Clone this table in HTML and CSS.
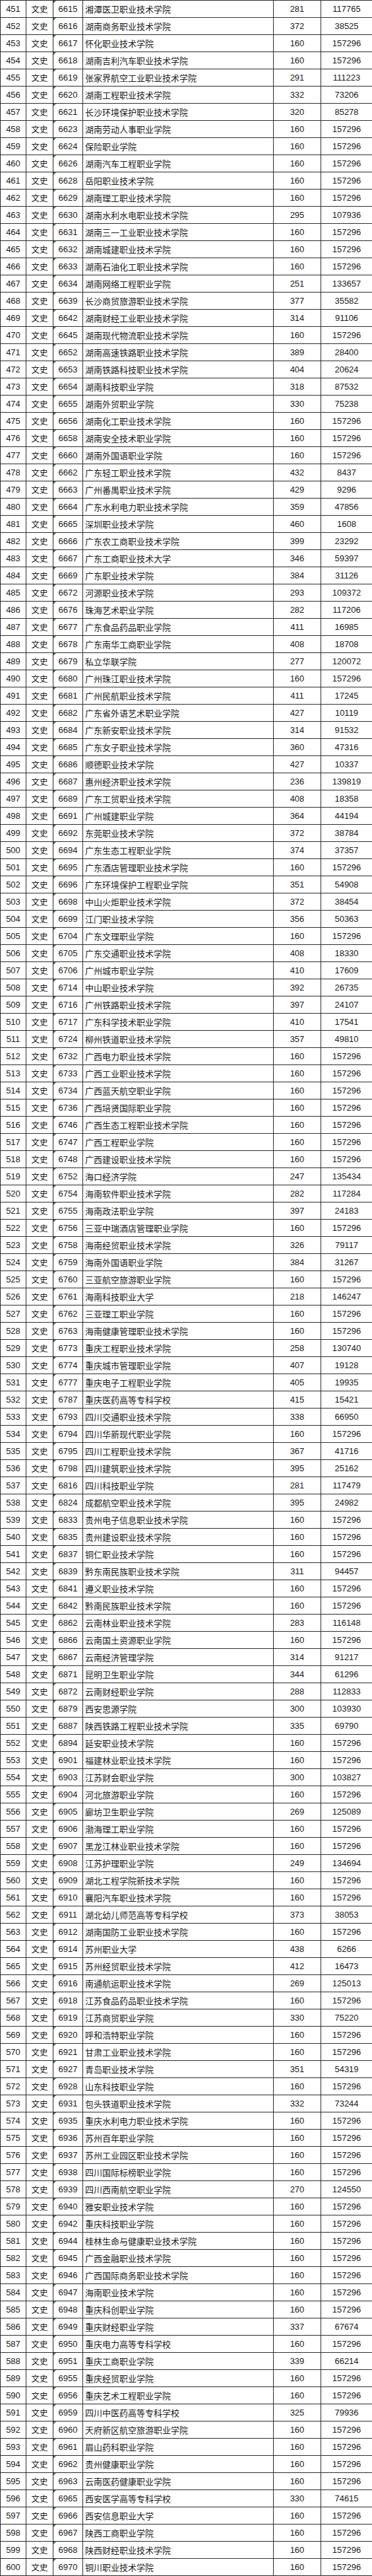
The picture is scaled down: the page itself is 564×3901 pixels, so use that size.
FILE: index.html
```html
<!DOCTYPE html>
<html lang="zh-CN">
<head>
<meta charset="utf-8">
<title>录取表</title>
<link rel="stylesheet" href="styles.css">
</head>
<body>
<table class="sheet">
<colgroup><col class="w1"><col class="w2"><col class="w3"><col class="w4"><col class="w5"><col class="w6"></colgroup>
<tbody>
<tr><td>451</td><td class="k">文史</td><td class="c">6615</td><td class="n">湘潭医卫职业技术学院</td><td>281</td><td>117765</td></tr>
<tr><td>452</td><td class="k">文史</td><td class="c">6616</td><td class="n">湖南商务职业技术学院</td><td>372</td><td>38525</td></tr>
<tr><td>453</td><td class="k">文史</td><td class="c">6617</td><td class="n">怀化职业技术学院</td><td>160</td><td>157296</td></tr>
<tr><td>454</td><td class="k">文史</td><td class="c">6618</td><td class="n">湖南吉利汽车职业技术学院</td><td>160</td><td>157296</td></tr>
<tr><td>455</td><td class="k">文史</td><td class="c">6619</td><td class="n">张家界航空工业职业技术学院</td><td>291</td><td>111223</td></tr>
<tr><td>456</td><td class="k">文史</td><td class="c">6620</td><td class="n">湖南工程职业技术学院</td><td>332</td><td>73206</td></tr>
<tr><td>457</td><td class="k">文史</td><td class="c">6621</td><td class="n">长沙环境保护职业技术学院</td><td>320</td><td>85278</td></tr>
<tr><td>458</td><td class="k">文史</td><td class="c">6623</td><td class="n">湖南劳动人事职业学院</td><td>160</td><td>157296</td></tr>
<tr><td>459</td><td class="k">文史</td><td class="c">6624</td><td class="n">保险职业学院</td><td>160</td><td>157296</td></tr>
<tr><td>460</td><td class="k">文史</td><td class="c">6626</td><td class="n">湖南汽车工程职业学院</td><td>160</td><td>157296</td></tr>
<tr><td>461</td><td class="k">文史</td><td class="c">6628</td><td class="n">岳阳职业技术学院</td><td>160</td><td>157296</td></tr>
<tr><td>462</td><td class="k">文史</td><td class="c">6629</td><td class="n">湖南理工职业技术学院</td><td>160</td><td>157296</td></tr>
<tr><td>463</td><td class="k">文史</td><td class="c">6630</td><td class="n">湖南水利水电职业技术学院</td><td>295</td><td>107936</td></tr>
<tr><td>464</td><td class="k">文史</td><td class="c">6631</td><td class="n">湖南三一工业职业技术学院</td><td>160</td><td>157296</td></tr>
<tr><td>465</td><td class="k">文史</td><td class="c">6632</td><td class="n">湖南城建职业技术学院</td><td>160</td><td>157296</td></tr>
<tr><td>466</td><td class="k">文史</td><td class="c">6633</td><td class="n">湖南石油化工职业技术学院</td><td>160</td><td>157296</td></tr>
<tr><td>467</td><td class="k">文史</td><td class="c">6634</td><td class="n">湖南网络工程职业学院</td><td>251</td><td>133657</td></tr>
<tr><td>468</td><td class="k">文史</td><td class="c">6639</td><td class="n">长沙商贸旅游职业技术学院</td><td>377</td><td>35582</td></tr>
<tr><td>469</td><td class="k">文史</td><td class="c">6642</td><td class="n">湖南财经工业职业技术学院</td><td>314</td><td>91106</td></tr>
<tr><td>470</td><td class="k">文史</td><td class="c">6645</td><td class="n">湖南现代物流职业技术学院</td><td>160</td><td>157296</td></tr>
<tr><td>471</td><td class="k">文史</td><td class="c">6652</td><td class="n">湖南高速铁路职业技术学院</td><td>389</td><td>28400</td></tr>
<tr><td>472</td><td class="k">文史</td><td class="c">6653</td><td class="n">湖南铁路科技职业技术学院</td><td>404</td><td>20624</td></tr>
<tr><td>473</td><td class="k">文史</td><td class="c">6654</td><td class="n">湖南科技职业学院</td><td>318</td><td>87532</td></tr>
<tr><td>474</td><td class="k">文史</td><td class="c">6655</td><td class="n">湖南外贸职业学院</td><td>330</td><td>75238</td></tr>
<tr><td>475</td><td class="k">文史</td><td class="c">6656</td><td class="n">湖南化工职业技术学院</td><td>160</td><td>157296</td></tr>
<tr><td>476</td><td class="k">文史</td><td class="c">6658</td><td class="n">湖南安全技术职业学院</td><td>160</td><td>157296</td></tr>
<tr><td>477</td><td class="k">文史</td><td class="c">6660</td><td class="n">湖南外国语职业学院</td><td>160</td><td>157296</td></tr>
<tr><td>478</td><td class="k">文史</td><td class="c">6662</td><td class="n">广东轻工职业技术学院</td><td>432</td><td>8437</td></tr>
<tr><td>479</td><td class="k">文史</td><td class="c">6663</td><td class="n">广州番禺职业技术学院</td><td>429</td><td>9296</td></tr>
<tr><td>480</td><td class="k">文史</td><td class="c">6664</td><td class="n">广东水利电力职业技术学院</td><td>359</td><td>47856</td></tr>
<tr><td>481</td><td class="k">文史</td><td class="c">6665</td><td class="n">深圳职业技术学院</td><td>460</td><td>1608</td></tr>
<tr><td>482</td><td class="k">文史</td><td class="c">6666</td><td class="n">广东农工商职业技术学院</td><td>399</td><td>23292</td></tr>
<tr><td>483</td><td class="k">文史</td><td class="c">6667</td><td class="n">广东工商职业技术大学</td><td>346</td><td>59397</td></tr>
<tr><td>484</td><td class="k">文史</td><td class="c">6669</td><td class="n">广东职业技术学院</td><td>384</td><td>31126</td></tr>
<tr><td>485</td><td class="k">文史</td><td class="c">6672</td><td class="n">河源职业技术学院</td><td>293</td><td>109372</td></tr>
<tr><td>486</td><td class="k">文史</td><td class="c">6676</td><td class="n">珠海艺术职业学院</td><td>282</td><td>117206</td></tr>
<tr><td>487</td><td class="k">文史</td><td class="c">6677</td><td class="n">广东食品药品职业学院</td><td>411</td><td>16985</td></tr>
<tr><td>488</td><td class="k">文史</td><td class="c">6678</td><td class="n">广东南华工商职业学院</td><td>408</td><td>18708</td></tr>
<tr><td>489</td><td class="k">文史</td><td class="c">6679</td><td class="n">私立华联学院</td><td>277</td><td>120072</td></tr>
<tr><td>490</td><td class="k">文史</td><td class="c">6680</td><td class="n">广州珠江职业技术学院</td><td>160</td><td>157296</td></tr>
<tr><td>491</td><td class="k">文史</td><td class="c">6681</td><td class="n">广州民航职业技术学院</td><td>411</td><td>17245</td></tr>
<tr><td>492</td><td class="k">文史</td><td class="c">6682</td><td class="n">广东省外语艺术职业学院</td><td>427</td><td>10119</td></tr>
<tr><td>493</td><td class="k">文史</td><td class="c">6684</td><td class="n">广东新安职业技术学院</td><td>314</td><td>91532</td></tr>
<tr><td>494</td><td class="k">文史</td><td class="c">6685</td><td class="n">广东女子职业技术学院</td><td>360</td><td>47316</td></tr>
<tr><td>495</td><td class="k">文史</td><td class="c">6686</td><td class="n">顺德职业技术学院</td><td>427</td><td>10337</td></tr>
<tr><td>496</td><td class="k">文史</td><td class="c">6687</td><td class="n">惠州经济职业技术学院</td><td>236</td><td>139819</td></tr>
<tr><td>497</td><td class="k">文史</td><td class="c">6689</td><td class="n">广东工贸职业技术学院</td><td>408</td><td>18358</td></tr>
<tr><td>498</td><td class="k">文史</td><td class="c">6691</td><td class="n">广州城建职业学院</td><td>364</td><td>44194</td></tr>
<tr><td>499</td><td class="k">文史</td><td class="c">6692</td><td class="n">东莞职业技术学院</td><td>372</td><td>38784</td></tr>
<tr><td>500</td><td class="k">文史</td><td class="c">6694</td><td class="n">广东生态工程职业学院</td><td>374</td><td>37357</td></tr>
<tr><td>501</td><td class="k">文史</td><td class="c">6695</td><td class="n">广东酒店管理职业技术学院</td><td>160</td><td>157296</td></tr>
<tr><td>502</td><td class="k">文史</td><td class="c">6696</td><td class="n">广东环境保护工程职业学院</td><td>351</td><td>54908</td></tr>
<tr><td>503</td><td class="k">文史</td><td class="c">6698</td><td class="n">中山火炬职业技术学院</td><td>372</td><td>38454</td></tr>
<tr><td>504</td><td class="k">文史</td><td class="c">6699</td><td class="n">江门职业技术学院</td><td>356</td><td>50363</td></tr>
<tr><td>505</td><td class="k">文史</td><td class="c">6704</td><td class="n">广东文理职业学院</td><td>160</td><td>157296</td></tr>
<tr><td>506</td><td class="k">文史</td><td class="c">6705</td><td class="n">广东交通职业技术学院</td><td>408</td><td>18330</td></tr>
<tr><td>507</td><td class="k">文史</td><td class="c">6706</td><td class="n">广州城市职业学院</td><td>410</td><td>17609</td></tr>
<tr><td>508</td><td class="k">文史</td><td class="c">6714</td><td class="n">中山职业技术学院</td><td>392</td><td>26735</td></tr>
<tr><td>509</td><td class="k">文史</td><td class="c">6716</td><td class="n">广州铁路职业技术学院</td><td>397</td><td>24107</td></tr>
<tr><td>510</td><td class="k">文史</td><td class="c">6717</td><td class="n">广东科学技术职业学院</td><td>410</td><td>17541</td></tr>
<tr><td>511</td><td class="k">文史</td><td class="c">6724</td><td class="n">柳州铁道职业技术学院</td><td>357</td><td>49810</td></tr>
<tr><td>512</td><td class="k">文史</td><td class="c">6732</td><td class="n">广西电力职业技术学院</td><td>160</td><td>157296</td></tr>
<tr><td>513</td><td class="k">文史</td><td class="c">6733</td><td class="n">广西工业职业技术学院</td><td>160</td><td>157296</td></tr>
<tr><td>514</td><td class="k">文史</td><td class="c">6734</td><td class="n">广西蓝天航空职业学院</td><td>160</td><td>157296</td></tr>
<tr><td>515</td><td class="k">文史</td><td class="c">6736</td><td class="n">广西培贤国际职业学院</td><td>160</td><td>157296</td></tr>
<tr><td>516</td><td class="k">文史</td><td class="c">6746</td><td class="n">广西生态工程职业技术学院</td><td>160</td><td>157296</td></tr>
<tr><td>517</td><td class="k">文史</td><td class="c">6747</td><td class="n">广西工程职业学院</td><td>160</td><td>157296</td></tr>
<tr><td>518</td><td class="k">文史</td><td class="c">6748</td><td class="n">广西建设职业技术学院</td><td>160</td><td>157296</td></tr>
<tr><td>519</td><td class="k">文史</td><td class="c">6752</td><td class="n">海口经济学院</td><td>247</td><td>135434</td></tr>
<tr><td>520</td><td class="k">文史</td><td class="c">6754</td><td class="n">海南软件职业技术学院</td><td>282</td><td>117284</td></tr>
<tr><td>521</td><td class="k">文史</td><td class="c">6755</td><td class="n">海南政法职业学院</td><td>397</td><td>24183</td></tr>
<tr><td>522</td><td class="k">文史</td><td class="c">6756</td><td class="n">三亚中瑞酒店管理职业学院</td><td>160</td><td>157296</td></tr>
<tr><td>523</td><td class="k">文史</td><td class="c">6758</td><td class="n">海南经贸职业技术学院</td><td>326</td><td>79117</td></tr>
<tr><td>524</td><td class="k">文史</td><td class="c">6759</td><td class="n">海南外国语职业学院</td><td>384</td><td>31267</td></tr>
<tr><td>525</td><td class="k">文史</td><td class="c">6760</td><td class="n">三亚航空旅游职业学院</td><td>160</td><td>157296</td></tr>
<tr><td>526</td><td class="k">文史</td><td class="c">6761</td><td class="n">海南科技职业大学</td><td>218</td><td>146247</td></tr>
<tr><td>527</td><td class="k">文史</td><td class="c">6762</td><td class="n">三亚理工职业学院</td><td>160</td><td>157296</td></tr>
<tr><td>528</td><td class="k">文史</td><td class="c">6763</td><td class="n">海南健康管理职业技术学院</td><td>160</td><td>157296</td></tr>
<tr><td>529</td><td class="k">文史</td><td class="c">6773</td><td class="n">重庆工程职业技术学院</td><td>258</td><td>130740</td></tr>
<tr><td>530</td><td class="k">文史</td><td class="c">6774</td><td class="n">重庆城市管理职业学院</td><td>407</td><td>19128</td></tr>
<tr><td>531</td><td class="k">文史</td><td class="c">6777</td><td class="n">重庆电子工程职业学院</td><td>405</td><td>19935</td></tr>
<tr><td>532</td><td class="k">文史</td><td class="c">6787</td><td class="n">重庆医药高等专科学校</td><td>415</td><td>15421</td></tr>
<tr><td>533</td><td class="k">文史</td><td class="c">6793</td><td class="n">四川交通职业技术学院</td><td>338</td><td>66950</td></tr>
<tr><td>534</td><td class="k">文史</td><td class="c">6794</td><td class="n">四川华新现代职业学院</td><td>160</td><td>157296</td></tr>
<tr><td>535</td><td class="k">文史</td><td class="c">6795</td><td class="n">四川工程职业技术学院</td><td>367</td><td>41716</td></tr>
<tr><td>536</td><td class="k">文史</td><td class="c">6798</td><td class="n">四川建筑职业技术学院</td><td>395</td><td>25162</td></tr>
<tr><td>537</td><td class="k">文史</td><td class="c">6816</td><td class="n">四川科技职业学院</td><td>281</td><td>117479</td></tr>
<tr><td>538</td><td class="k">文史</td><td class="c">6824</td><td class="n">成都航空职业技术学院</td><td>395</td><td>24982</td></tr>
<tr><td>539</td><td class="k">文史</td><td class="c">6833</td><td class="n">贵州电子信息职业技术学院</td><td>160</td><td>157296</td></tr>
<tr><td>540</td><td class="k">文史</td><td class="c">6835</td><td class="n">贵州建设职业技术学院</td><td>160</td><td>157296</td></tr>
<tr><td>541</td><td class="k">文史</td><td class="c">6837</td><td class="n">铜仁职业技术学院</td><td>160</td><td>157296</td></tr>
<tr><td>542</td><td class="k">文史</td><td class="c">6839</td><td class="n">黔东南民族职业技术学院</td><td>311</td><td>94457</td></tr>
<tr><td>543</td><td class="k">文史</td><td class="c">6841</td><td class="n">遵义职业技术学院</td><td>160</td><td>157296</td></tr>
<tr><td>544</td><td class="k">文史</td><td class="c">6842</td><td class="n">黔南民族职业技术学院</td><td>160</td><td>157296</td></tr>
<tr><td>545</td><td class="k">文史</td><td class="c">6862</td><td class="n">云南林业职业技术学院</td><td>283</td><td>116148</td></tr>
<tr><td>546</td><td class="k">文史</td><td class="c">6866</td><td class="n">云南国土资源职业学院</td><td>160</td><td>157296</td></tr>
<tr><td>547</td><td class="k">文史</td><td class="c">6867</td><td class="n">云南经济管理学院</td><td>314</td><td>91217</td></tr>
<tr><td>548</td><td class="k">文史</td><td class="c">6871</td><td class="n">昆明卫生职业学院</td><td>344</td><td>61296</td></tr>
<tr><td>549</td><td class="k">文史</td><td class="c">6872</td><td class="n">云南财经职业学院</td><td>288</td><td>112833</td></tr>
<tr><td>550</td><td class="k">文史</td><td class="c">6879</td><td class="n">西安思源学院</td><td>300</td><td>103930</td></tr>
<tr><td>551</td><td class="k">文史</td><td class="c">6887</td><td class="n">陕西铁路工程职业技术学院</td><td>335</td><td>69790</td></tr>
<tr><td>552</td><td class="k">文史</td><td class="c">6894</td><td class="n">延安职业技术学院</td><td>160</td><td>157296</td></tr>
<tr><td>553</td><td class="k">文史</td><td class="c">6901</td><td class="n">福建林业职业技术学院</td><td>160</td><td>157296</td></tr>
<tr><td>554</td><td class="k">文史</td><td class="c">6903</td><td class="n">江苏财会职业学院</td><td>300</td><td>103827</td></tr>
<tr><td>555</td><td class="k">文史</td><td class="c">6904</td><td class="n">河北旅游职业学院</td><td>160</td><td>157296</td></tr>
<tr><td>556</td><td class="k">文史</td><td class="c">6905</td><td class="n">廊坊卫生职业学院</td><td>269</td><td>125089</td></tr>
<tr><td>557</td><td class="k">文史</td><td class="c">6906</td><td class="n">渤海理工职业学院</td><td>160</td><td>157296</td></tr>
<tr><td>558</td><td class="k">文史</td><td class="c">6907</td><td class="n">黑龙江林业职业技术学院</td><td>160</td><td>157296</td></tr>
<tr><td>559</td><td class="k">文史</td><td class="c">6908</td><td class="n">江苏护理职业学院</td><td>249</td><td>134694</td></tr>
<tr><td>560</td><td class="k">文史</td><td class="c">6909</td><td class="n">湖北工程学院新技术学院</td><td>160</td><td>157296</td></tr>
<tr><td>561</td><td class="k">文史</td><td class="c">6910</td><td class="n">襄阳汽车职业技术学院</td><td>160</td><td>157296</td></tr>
<tr><td>562</td><td class="k">文史</td><td class="c">6911</td><td class="n">湖北幼儿师范高等专科学校</td><td>373</td><td>38053</td></tr>
<tr><td>563</td><td class="k">文史</td><td class="c">6912</td><td class="n">湖南国防工业职业技术学院</td><td>160</td><td>157296</td></tr>
<tr><td>564</td><td class="k">文史</td><td class="c">6914</td><td class="n">苏州职业大学</td><td>438</td><td>6266</td></tr>
<tr><td>565</td><td class="k">文史</td><td class="c">6915</td><td class="n">苏州经贸职业技术学院</td><td>412</td><td>16473</td></tr>
<tr><td>566</td><td class="k">文史</td><td class="c">6916</td><td class="n">南通航运职业技术学院</td><td>269</td><td>125013</td></tr>
<tr><td>567</td><td class="k">文史</td><td class="c">6918</td><td class="n">江苏食品药品职业技术学院</td><td>160</td><td>157296</td></tr>
<tr><td>568</td><td class="k">文史</td><td class="c">6919</td><td class="n">江苏商贸职业学院</td><td>330</td><td>75220</td></tr>
<tr><td>569</td><td class="k">文史</td><td class="c">6920</td><td class="n">呼和浩特职业学院</td><td>160</td><td>157296</td></tr>
<tr><td>570</td><td class="k">文史</td><td class="c">6921</td><td class="n">甘肃工业职业技术学院</td><td>160</td><td>157296</td></tr>
<tr><td>571</td><td class="k">文史</td><td class="c">6927</td><td class="n">青岛职业技术学院</td><td>351</td><td>54319</td></tr>
<tr><td>572</td><td class="k">文史</td><td class="c">6928</td><td class="n">山东科技职业学院</td><td>160</td><td>157296</td></tr>
<tr><td>573</td><td class="k">文史</td><td class="c">6931</td><td class="n">包头铁道职业技术学院</td><td>332</td><td>73244</td></tr>
<tr><td>574</td><td class="k">文史</td><td class="c">6935</td><td class="n">重庆水利电力职业技术学院</td><td>160</td><td>157296</td></tr>
<tr><td>575</td><td class="k">文史</td><td class="c">6936</td><td class="n">苏州百年职业学院</td><td>160</td><td>157296</td></tr>
<tr><td>576</td><td class="k">文史</td><td class="c">6937</td><td class="n">苏州工业园区职业技术学院</td><td>160</td><td>157296</td></tr>
<tr><td>577</td><td class="k">文史</td><td class="c">6938</td><td class="n">四川国际标榜职业学院</td><td>160</td><td>157296</td></tr>
<tr><td>578</td><td class="k">文史</td><td class="c">6939</td><td class="n">四川西南航空职业学院</td><td>270</td><td>124550</td></tr>
<tr><td>579</td><td class="k">文史</td><td class="c">6940</td><td class="n">雅安职业技术学院</td><td>160</td><td>157296</td></tr>
<tr><td>580</td><td class="k">文史</td><td class="c">6942</td><td class="n">重庆科技职业学院</td><td>160</td><td>157296</td></tr>
<tr><td>581</td><td class="k">文史</td><td class="c">6944</td><td class="n">桂林生命与健康职业技术学院</td><td>160</td><td>157296</td></tr>
<tr><td>582</td><td class="k">文史</td><td class="c">6945</td><td class="n">广西金融职业技术学院</td><td>160</td><td>157296</td></tr>
<tr><td>583</td><td class="k">文史</td><td class="c">6946</td><td class="n">广西国际商务职业技术学院</td><td>160</td><td>157296</td></tr>
<tr><td>584</td><td class="k">文史</td><td class="c">6947</td><td class="n">海南职业技术学院</td><td>160</td><td>157296</td></tr>
<tr><td>585</td><td class="k">文史</td><td class="c">6948</td><td class="n">重庆科创职业学院</td><td>160</td><td>157296</td></tr>
<tr><td>586</td><td class="k">文史</td><td class="c">6949</td><td class="n">重庆财经职业学院</td><td>337</td><td>67674</td></tr>
<tr><td>587</td><td class="k">文史</td><td class="c">6950</td><td class="n">重庆电力高等专科学校</td><td>160</td><td>157296</td></tr>
<tr><td>588</td><td class="k">文史</td><td class="c">6951</td><td class="n">重庆工商职业学院</td><td>339</td><td>66214</td></tr>
<tr><td>589</td><td class="k">文史</td><td class="c">6955</td><td class="n">重庆经贸职业学院</td><td>160</td><td>157296</td></tr>
<tr><td>590</td><td class="k">文史</td><td class="c">6956</td><td class="n">重庆艺术工程职业学院</td><td>160</td><td>157296</td></tr>
<tr><td>591</td><td class="k">文史</td><td class="c">6959</td><td class="n">四川中医药高等专科学校</td><td>325</td><td>79936</td></tr>
<tr><td>592</td><td class="k">文史</td><td class="c">6960</td><td class="n">天府新区航空旅游职业学院</td><td>160</td><td>157296</td></tr>
<tr><td>593</td><td class="k">文史</td><td class="c">6961</td><td class="n">眉山药科职业学院</td><td>160</td><td>157296</td></tr>
<tr><td>594</td><td class="k">文史</td><td class="c">6962</td><td class="n">贵州健康职业学院</td><td>160</td><td>157296</td></tr>
<tr><td>595</td><td class="k">文史</td><td class="c">6963</td><td class="n">云南医药健康职业学院</td><td>160</td><td>157296</td></tr>
<tr><td>596</td><td class="k">文史</td><td class="c">6965</td><td class="n">西安医学高等专科学校</td><td>330</td><td>74615</td></tr>
<tr><td>597</td><td class="k">文史</td><td class="c">6966</td><td class="n">西安信息职业大学</td><td>160</td><td>157296</td></tr>
<tr><td>598</td><td class="k">文史</td><td class="c">6967</td><td class="n">陕西工商职业学院</td><td>160</td><td>157296</td></tr>
<tr><td>599</td><td class="k">文史</td><td class="c">6968</td><td class="n">陕西财经职业技术学院</td><td>160</td><td>157296</td></tr>
<tr><td>600</td><td class="k">文史</td><td class="c">6970</td><td class="n">铜川职业技术学院</td><td>160</td><td>157296</td></tr>
</tbody>
</table>
</body>
</html>
```

FILE: styles.css
```css
html, body {
  margin: 0;
  padding: 0;
  background: #ffffff;
}

.sheet {
  border-collapse: collapse;
  table-layout: fixed;
  width: 564px;
  font-family: "Liberation Sans", "Noto Sans CJK SC", sans-serif;
  font-size: 13px;
  color: #1b1b1b;
}

.w1 { width: 39px; }
.w2 { width: 41px; }
.w3 { width: 45px; }
.w4 { width: 289px; }
.w5 { width: 72px; }
.w6 { width: 78px; }

.sheet tr {
  height: 26px;
}

.sheet td {
  border: 1px solid #2b2b2b;
  padding: 0;
  text-align: center;
  vertical-align: middle;
  white-space: nowrap;
  line-height: 24px;
}

.sheet td.k {
  font-family: "Noto Sans CJK SC", sans-serif;
  font-size: 12.5px;
}

.sheet td.n {
  text-align: left;
  padding-left: 3px;
  font-family: "Noto Sans CJK SC", sans-serif;
  font-size: 13px;
}

.sheet td.c {
  position: relative;
}

.sheet td.c::before {
  content: "";
  position: absolute;
  left: 0;
  top: 0;
  border-top: 4px solid #2e7d32;
  border-right: 4px solid transparent;
}
```
